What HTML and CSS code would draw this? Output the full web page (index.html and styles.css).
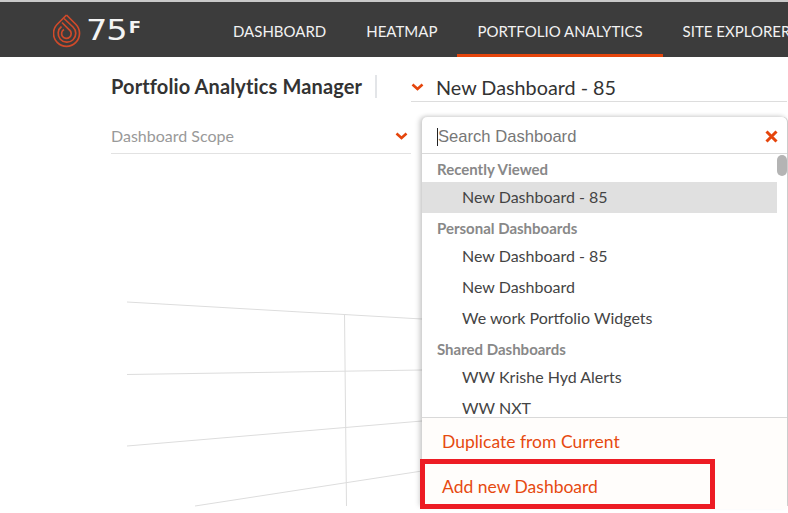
FILE: index.html
```html
<!DOCTYPE html>
<html lang="en">
<head>
<meta charset="utf-8">
<title>Portfolio Analytics Manager</title>
<link rel="stylesheet" href="styles.css">
</head>
<body>
<header class="topbar">
  <div class="brand">
    <svg class="brand-mark" width="28" height="34" viewBox="0 0 28 34" fill="none" stroke="#cf4a2a" stroke-width="1.7">
      <path d="M13.5 1 L4 10.5 A13 13 0 1 0 23 10.5 L13.5 1"/>
      <path d="M8.5 12.5 A8.8 8.8 0 1 0 20 13 L11 4.5"/>
      <path d="M11 15.5 A4.8 4.8 0 1 0 16.5 16 L9 8.5"/>
    </svg>
    <span class="brand-name">75<span class="brand-f">F</span></span>
  </div>
  <nav class="nav">
    <a class="nav-item">DASHBOARD</a>
    <a class="nav-item">HEATMAP</a>
    <a class="nav-item active">PORTFOLIO ANALYTICS</a>
    <a class="nav-item">SITE EXPLORER</a>
  </nav>
</header>
<main class="content">
  <svg class="chart-lines" width="788" height="456" viewBox="0 57 788 456" fill="none" stroke="#dddddd" stroke-width="1">
    <path d="M127 302 L422 319"/>
    <path d="M127 374.5 L422 370"/>
    <path d="M127 446 L422 421"/>
    <path d="M195 506 L422 471"/>
    <path d="M344.5 314 L346.5 506"/>
  </svg>
  <div class="title-row">
    <h1 class="page-title">Portfolio Analytics Manager</h1>
    <span class="title-sep"></span>
    <div class="dash-select">
      <svg class="chev" width="13" height="8" viewBox="0 0 13 8"><path d="M1.5 1.5 L6.5 6 L11.5 1.5" fill="none" stroke="#e5450c" stroke-width="2.6"/></svg>
      <span class="dash-name">New Dashboard - 85</span>
    </div>
  </div>
  <div class="scope-row">
    <span class="scope-label">Dashboard Scope</span>
    <svg class="chev" width="13" height="8" viewBox="0 0 13 8"><path d="M1.5 1.5 L6.5 6 L11.5 1.5" fill="none" stroke="#e5450c" stroke-width="2.6"/></svg>
  </div>
  <section class="panel">
    <div class="search">
      <span class="caret"></span>
      <span class="search-text">Search Dashboard</span>
      <svg class="close" width="13" height="13" viewBox="0 0 13 13"><path d="M1.5 1.5 L11.5 11.5 M11.5 1.5 L1.5 11.5" stroke="#e5450c" stroke-width="3"/></svg>
    </div>
    <div class="list">
      <div class="list-inner">
        <div class="group">Recently Viewed</div>
        <div class="row selected">New Dashboard - 85</div>
        <div class="group">Personal Dashboards</div>
        <div class="row">New Dashboard - 85</div>
        <div class="row">New Dashboard</div>
        <div class="row">We work Portfolio Widgets</div>
        <div class="group">Shared Dashboards</div>
        <div class="row">WW Krishe Hyd Alerts</div>
        <div class="row">WW NXT</div>
      </div>
      <span class="thumb"></span>
    </div>
    <div class="actions">
      <a class="action">Duplicate from Current</a>
      <a class="action">Add new Dashboard</a>
    </div>
    <span class="highlight"></span>
  </section>
</main>
</body>
</html>
```
FILE: styles.css
```css
* { box-sizing: border-box; }
html, body { margin: 0; height: 100%; }
body {
  width: 788px;
  height: 513px;
  overflow: hidden;
  background: #fff;
  font-family: Lato, "Open Sans", sans-serif;
  color: #333;
}
.topbar {
  height: 57px;
  background: #3c3c3c;
  border-top: 2px solid #c9c9c9;
  display: flex;
  align-items: stretch;
  overflow: hidden;
}
.brand {
  width: 213px;
  padding-left: 53px;
  display: flex;
  align-items: center;
  flex: none;
}
.brand-mark { flex: none; margin-top: 2px; }
.brand-name {
  margin: 3px 0 0 5px;
  color: #f4f4f4;
  font-family: "DejaVu Sans", sans-serif;
  font-size: 28px;
  line-height: 20px;
  letter-spacing: -1px;
  display: flex;
  align-items: flex-start;
  transform: scaleX(1.2);
  transform-origin: left center;
}
.brand-f { font-size: 15px; line-height: 14px; font-weight: 700; margin-left: 2px; }
.nav { display: flex; flex: none; }
.nav-item {
  padding: 5px 20px 0;
  display: flex;
  align-items: center;
  color: #f2f2f2;
  font-size: 15px;
  white-space: nowrap;
  border-bottom: 3px solid transparent;
}
.nav-item.active { border-bottom-color: #e5450c; }
.content {
  position: relative;
  height: 456px;
  padding: 16px 0 0 111px;
}
.chart-lines { position: absolute; left: 0; top: 0; }
.title-row { position: relative; display: flex; height: 26px; align-items: center; }
.page-title {
  margin: 0;
  font-size: 20px;
  font-weight: 700;
  line-height: 24px;
  letter-spacing: .12px;
  color: #333;
  white-space: nowrap;
}
.title-sep { width: 2px; height: 23px; background: #e3e5e8; margin-left: 13px; flex: none; }
.dash-select {
  margin-left: 34px;
  width: 376px;
  height: 28px;
  margin-top: 1px;
  padding-bottom: 2px;
  display: flex;
  align-items: center;
  border-bottom: 1px solid #ddd;
  align-self: flex-start;
}
.dash-name { margin-left: 12px; font-size: 19.8px; color: #333; white-space: nowrap; }
.scope-row {
  position: relative;
  margin-top: 21px;
  width: 300px;
  height: 34px;
  padding-bottom: 2px;
  display: flex;
  align-items: center;
  justify-content: space-between;
  padding-right: 3px;
  border-bottom: 1px solid #e2e2e2;
}
.scope-label { font-size: 16px; color: #999; }
.panel {
  position: absolute;
  left: 422px;
  top: 60px;
  width: 365px;
  height: 389px;
  background: #fff;
  border-radius: 5px 5px 0 0;
  box-shadow: -3px 0 5px rgba(0,0,0,.16), 0 -1px 4px rgba(0,0,0,.1), 1px 0 0 #d8d8d8;
  display: flex;
  flex-direction: column;
}
.search {
  height: 37px;
  flex: none;
  display: flex;
  align-items: center;
  padding: 3px 9px 0 15px;
  border-bottom: 1px solid #d9d9d9;
}
.caret { width: 1px; height: 18px; background: #222; flex: none; }
.search-text {
  font-family: "Liberation Sans", Arial, sans-serif;
  font-size: 16.6px;
  color: #777;
  flex: 1;
}
.list { position: relative; height: 263px; flex: none; overflow: hidden; }
.list-inner { width: 355px; }
.group {
  height: 28px;
  padding: 2px 0 0 15px;
  display: flex;
  align-items: center;
  font-size: 15px;
  font-weight: 700;
  color: #888;
}
.row {
  height: 31px;
  padding: 0 0 2px 40px;
  display: flex;
  align-items: center;
  font-size: 16px;
  color: #444;
}
.row.selected { background: #e0e0e0; }
.thumb {
  position: absolute;
  right: 0;
  top: 1px;
  width: 10px;
  height: 21px;
  border-radius: 5px;
  background: #b4b4b4;
}
.actions {
  flex: 1;
  background: #fffdfb;
  border-top: 1px solid #d9d9d9;
  display: flex;
  flex-direction: column;
  padding-top: 1px;
}
.action {
  height: 45px;
  padding-left: 20px;
  display: flex;
  align-items: center;
  font-size: 17.5px;
  color: #e64a10;
}
.highlight {
  position: absolute;
  left: -2px;
  top: 342px;
  width: 295px;
  height: 50px;
  border: 5px solid #ed1c24;
}
```
